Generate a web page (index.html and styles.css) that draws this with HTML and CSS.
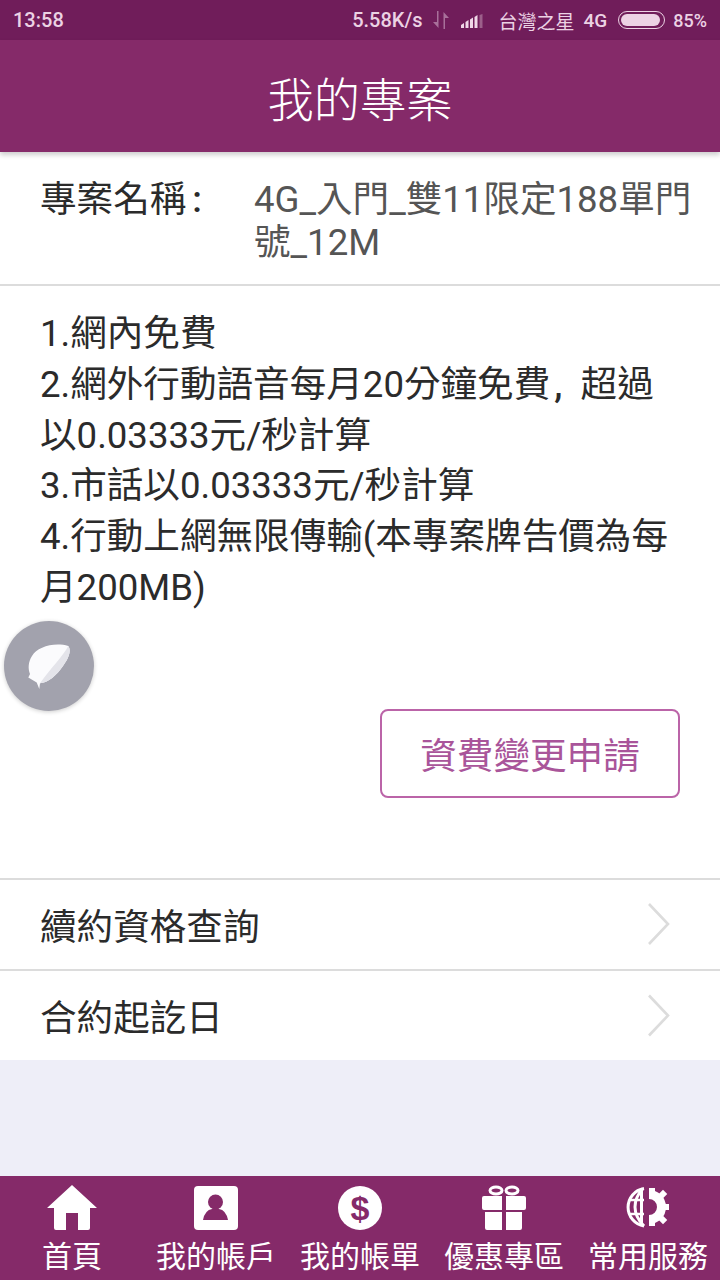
FILE: index.html
```html
<!DOCTYPE html>
<html lang="zh-Hant">
<head>
<meta charset="utf-8">
<title>我的專案</title>
<link rel="stylesheet" href="styles.css">
</head>
<body>
<div class="page">
  <div class="status">
    <span class="time">13:58</span>
    <div class="status-right">
      <span class="speed">5.58K/s</span>
      <svg class="ic-data" width="16" height="18" viewBox="0 0 16 18"><path d="M5.500 0v17L0 11h4V0zM10.500 18V1L16 7h-4v11z" fill="#a8709a"/></svg>
      <svg class="ic-signal" width="23" height="14" viewBox="0 0 23 14"><g fill="#f0d8e8"><path d="M0 11l3-2v5H0z"/><path d="M4.500 8l3-2v8h-3z"/><path d="M9 5.500l3-2V14H9z"/><path d="M13.500 3l3-2v13h-3z"/></g><path d="M18.500 1l3-1v14h-3z" fill="#9c5f8a"/></svg>
      <span class="carrier">台灣之星</span>
      <span class="net">4G</span>
      <span class="battery"><span class="battery-fill"></span></span>
      <span class="pct">85%</span>
    </div>
  </div>
  <header class="appbar">我的專案</header>
  <section class="plan-name">
    <span class="plan-label">專案名稱<span class="colon">:</span></span>
    <span class="plan-value">4G_入門_雙11限定188單門號_12M</span>
  </section>
  <section class="plan-body">
    <div class="plan-text">
      <p>1.網內免費</p>
      <p>2.網外行動語音每月20分鐘免費<span class="comma">, </span>超過以0.03333元/秒計算</p>
      <p>3.市話以0.03333元/秒計算</p>
      <p>4.行動上網無限傳輸(本專案牌告價為每月200MB)</p>
    </div>
    <div class="action"><button class="change-btn">資費變更申請</button></div>
  </section>
  <div class="row">
    <span>續約資格查詢</span>
    <svg class="chev" width="24" height="44" viewBox="0 0 24 44"><path d="M3 1l19 20L3 41" fill="none" stroke="#dcdcdc" stroke-width="2.600"/></svg>
  </div>
  <div class="row">
    <span>合約起訖日</span>
    <svg class="chev" width="24" height="44" viewBox="0 0 24 44"><path d="M3 1.500l19 20L3 41.500" fill="none" stroke="#dcdcdc" stroke-width="2.600"/></svg>
  </div>
  <div class="spacer"></div>
  <nav class="tabs">
    <div class="tab">
      <svg width="50" height="46" viewBox="0 0 50 46"><path fill="#fff" d="M25 0L50 23H43V43q0 2-2 2H31V28H19V45H9q-2 0-2-2V23H0z"/></svg>
      <span>首頁</span>
    </div>
    <div class="tab">
      <svg width="46" height="46" viewBox="0 0 46 46"><rect x="1" y="1" width="44" height="44" rx="4" fill="#fff"/><circle cx="22.500" cy="17" r="7.500" fill="#852a69"/><path fill="#852a69" d="M10 35q2-10 9-11h7q7 1 9 11z"/></svg>
      <span>我的帳戶</span>
    </div>
    <div class="tab">
      <svg width="46" height="46" viewBox="0 0 46 46"><circle cx="23" cy="23" r="22" fill="#fff"/><text x="23" y="35" class="dollar" text-anchor="middle">$</text></svg>
      <span>我的帳單</span>
    </div>
    <div class="tab">
      <svg width="46" height="46" viewBox="0 0 46 46"><g fill="none" stroke="#fff" stroke-width="3"><ellipse cx="15" cy="5.500" rx="6" ry="3.500"/><ellipse cx="31" cy="5.500" rx="6" ry="3.500"/></g><path fill="#fff" d="M3 11h18v14H3q-2 0-2-2V13q0-2 2-2zM25 11h18q2 0 2 2v10q0 2-2 2H25zM4 27h17v18H6q-2 0-2-2zM25 27h16v16q0 2-2 2H25z"/></svg>
      <span>優惠專區</span>
    </div>
    <div class="tab">
      <svg width="46" height="46" viewBox="0 0 46 46"><g fill="none" stroke="#fff" stroke-width="3"><path d="M19 3.500A19 19 0 0 0 19 41"/><path d="M18 3.500Q10 12 10 22t9 19"/><path d="M16.500 3v38"/><path stroke-width="2.600" d="M5 15h14M5 29h14"/></g><path d="M24 9.500A12.500 12.500 0 0 1 24 34.500" fill="none" stroke="#fff" stroke-width="9"/><g fill="#fff"><rect x="24" y="3" width="6" height="8"/><rect x="24" y="33" width="6" height="8"/><rect x="38" y="19" width="6" height="6"/><rect x="35" y="6" width="6" height="6" transform="rotate(45 38 9)"/><rect x="35" y="32" width="6" height="6" transform="rotate(-45 38 35)"/></g></svg>
      <span>常用服務</span>
    </div>
  </nav>
  <div class="bubble">
    <svg width="50" height="54" viewBox="0 0 50 54"><path fill="#fbfbfd" d="M44.300 7C30 3 13 8 8 17C4 23 4 30 6 35L4.300 38.500L12.700 43.500L15.300 50L16 44.300C24 44 33 36 39 27C44 20 48 12 44.300 7z"/><path fill="#e4e4ea" d="M44.300 7C40 16 26 30 16 44.300C24 44 33 36 39 27C44 20 48 12 44.300 7z"/></svg>
  </div>
</div>
</body>
</html>
```
FILE: styles.css
```css
* { box-sizing: border-box; }
html, body { margin: 0; padding: 0; }
body {
  width: 720px;
  height: 1280px;
  overflow: hidden;
  font-family: Roboto, "Noto Sans CJK TC", sans-serif;
  background: #fff;
}
.colon { margin-left: 6px; font-weight: 500; }
.comma { margin-left: 4px; margin-right: 9px; font-weight: 500; }
.page {
  position: relative;
  width: 720px;
  height: 1280px;
  display: flex;
  flex-direction: column;
}
.status {
  height: 40px;
  flex: none;
  background: #701d5a;
  color: #ecd2e4;
  display: flex;
  align-items: center;
  justify-content: space-between;
  padding: 0 13px 0 13px;
  font-size: 20px;
  font-weight: 500;
}
.status-right {
  display: flex;
  align-items: center;
}
.speed { margin-right: 10px; }
.ic-data { margin-right: 12px; }
.ic-signal { margin-right: 15px; margin-top: 2px; }
.carrier { font-size: 19px; font-weight: 400; margin-right: 9px; }
.net { font-size: 19px; margin-right: 11px; }
.battery {
  width: 47px;
  height: 18px;
  border: 1.500px solid #ecd2e4;
  border-radius: 9px;
  padding: 2px;
  margin-right: 8px;
  display: flex;
}
.battery-fill {
  flex: 1;
  background: #ecd2e4;
  border-radius: 6px;
  margin-right: 2px;
}
.pct { font-size: 18px; }
.appbar {
  height: 112px;
  flex: none;
  background: #852a69;
  color: #fff;
  display: flex;
  align-items: center;
  justify-content: center;
  font-size: 46.300px;
  font-weight: 300;
  box-shadow: 0 3px 5px rgba(0,0,0,.2);
  position: relative;
  z-index: 1;
}
.plan-name {
  height: 134px;
  flex: none;
  border-bottom: 2px solid #dcdcdc;
  padding: 26px 26px 0 40px;
  display: flex;
  font-size: 36.600px;
  line-height: 43px;
}
.plan-label { width: 214px; flex: none; color: #2b2b2b; }
.plan-value { color: #555; flex: 1; }
.plan-body {
  height: 592px;
  flex: none;
  padding: 23px 0 0 40px;
  display: flex;
  flex-direction: column;
}
.plan-text {
  width: 641px;
  font-size: 36.600px;
  line-height: 50.800px;
  color: #2b2b2b;
}
.plan-text p { margin: 0; }
.action {
  display: flex;
  justify-content: flex-end;
  padding-right: 40px;
  margin-top: 95px;
}
.change-btn {
  width: 300px;
  height: 89px;
  background: #fff;
  border: 2px solid #bb64a8;
  border-radius: 8px;
  color: #a9559a;
  font-family: inherit;
  font-size: 36.600px;
  padding: 0;
}
.row {
  height: 91px;
  flex: none;
  border-top: 2px solid #dcdcdc;
  padding: 0 50px 0 40px;
  display: flex;
  align-items: center;
  justify-content: space-between;
  font-size: 36.600px;
  color: #2b2b2b;
}
.spacer {
  flex: 1;
  background: #eeeef8;
}
.tabs {
  height: 104px;
  flex: none;
  background: #852a69;
  display: grid;
  grid-template-columns: repeat(5, 144px);
  padding-top: 9px;
}
.tab {
  display: flex;
  flex-direction: column;
  align-items: center;
  color: #fff;
  font-size: 30px;
  line-height: 34px;
  white-space: nowrap;
}
.tab svg { height: 46px; margin-bottom: 9px; }
.dollar {
  font-family: "Liberation Sans", sans-serif;
  font-weight: 700;
  font-size: 34px;
  fill: #852a69;
}
.bubble {
  position: absolute;
  left: 4px;
  top: 621px;
  width: 90px;
  height: 90px;
  border-radius: 50%;
  background: #a2a2ad;
  box-shadow: 0 1px 4px rgba(0,0,0,.2);
  display: flex;
  align-items: center;
  justify-content: center;
  z-index: 2;
}
```
